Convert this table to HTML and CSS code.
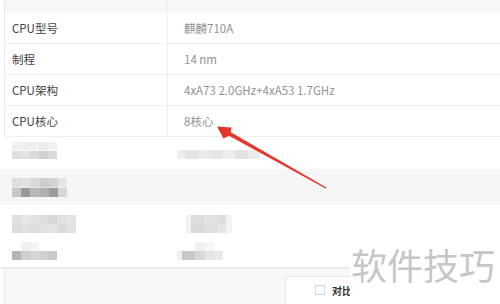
FILE: index.html
```html
<!DOCTYPE html>
<html lang="zh">
<head>
<meta charset="utf-8">
<link rel="stylesheet" href="styles.css">
</head>
<body>
<div class="page">
  <div class="spec">
    <div class="row head"><div class="label"></div><div class="value"></div></div>
    <div class="row"><div class="label">CPU型号</div><div class="value">麒麟710A</div></div>
    <div class="row"><div class="label">制程</div><div class="value">14 nm</div></div>
    <div class="row"><div class="label">CPU架构</div><div class="value">4xA73 2.0GHz+4xA53 1.7GHz</div></div>
    <div class="row"><div class="label">CPU核心</div><div class="value">8核心</div></div>
  </div>
  <div class="hidden">
    <div class="hrow hr-a"><span class="mz mz-a1"></span><span class="mz mz-a2"></span></div>
    <div class="hrow hr-b"><span class="mz mz-b1"></span></div>
    <div class="hrow hr-c"><span class="mz mz-c1"></span><span class="mz mz-c2"></span></div>
    <div class="hrow hr-d"><span class="mz mz-d1"></span><span class="mz mz-d2"></span></div>
  </div>
  <div class="footer">
    <div class="compare"><span class="check"></span><span class="compare-text">对比</span></div>
  </div>
  <div class="watermark">软件技巧</div>
  <svg class="arrow" width="500" height="304" viewBox="0 0 500 304">
    <polygon points="217,126.5 231.5,127.5 230.8,132.2 326.4,187.4 325.6,188.6 229,135.8 223.5,138.5" fill="#e8352b"/>
  </svg>
</div>
</body>
</html>
```
FILE: styles.css
```css
* { box-sizing: border-box; }
html, body { margin: 0; padding: 0; background: #fff; }
body {
  font-family: "Noto Sans CJK SC", "Noto Sans", sans-serif;
  width: 500px;
  height: 304px;
  overflow: hidden;
}
.page {
  position: relative;
  width: 500px;
  height: 304px;
  display: flex;
  flex-direction: column;
}
.spec {
  margin-left: 4px;
  border-left: 1px solid #ececec;
}
.row {
  display: flex;
  height: 31px;
  border-bottom: 1px solid #efefef;
  font-size: 11.5px;
  align-items: stretch;
}
.row.head {
  height: 13px;
  background: #f7f7f7;
  border-bottom: none;
}
.label {
  width: 163px;
  flex: none;
  padding-left: 7px;
  display: flex;
  align-items: center;
  color: #444;
  border-right: 1px solid #efefef;
}
.value {
  flex: 1;
  padding-left: 16px;
  display: flex;
  align-items: center;
  color: #929292;
}
.hidden {
  display: flex;
  flex-direction: column;
}
.hrow {
  position: relative;
  display: flex;
}
.hr-a { height: 32px; }
.hr-b { height: 36px; background: #f6f6f6; }
.hr-c { height: 33px; }
.hr-d { height: 31px; border-bottom: 2px solid #ececec; }
.mz {
  display: block;
  position: absolute;
  background-repeat: no-repeat;
  background-size: 100% 50%;
  background-position: top, bottom;
}
.mz-a1 {
  left: 12px; top: 5px; width: 45px; height: 17px;
  background-image:
    linear-gradient(to right, #f1f1f1 0 20%, #eeeeee 20% 40%, #f0f0f0 40% 60%, #ececec 60% 80%, #f2f2f2 80%),
    linear-gradient(to right, #dedede 0 20%, #e2e2e2 20% 40%, #dadada 40% 60%, #d0d0d0 60% 80%, #dbdbdb 80%);
}
.mz-a2 {
  left: 177px; top: 13px; width: 83px; height: 9px;
  background-size: 100% 100%;
  background-image: linear-gradient(to right, #eeeeee 0 10%, #e4e4e4 10% 25%, #ebebeb 25% 40%, #e6e6e6 40% 55%, #efefef 55% 70%, #e3e3e3 70% 85%, #ededed 85%);
}
.mz-b1 {
  left: 12px; top: 9px; width: 55px; height: 19px;
  background-image:
    linear-gradient(to right, #dedede 0 17%, #e2e2e2 17% 33%, #d9d9d9 33% 50%, #cdcdcd 50% 67%, #d4d4d4 67% 83%, #e6e6ea 83%),
    linear-gradient(to right, #c6c6c6 0 17%, #9c9899 17% 33%, #b8b8b8 33% 50%, #b0b0b0 50% 67%, #9e9a9b 67% 83%, #d6d6da 83%);
}
.mz-c1 {
  left: 12px; top: 10px; width: 64px; height: 18px;
  background-image:
    linear-gradient(to right, #e0e0e0 0 14%, #e6e6e6 14% 28%, #e2e2e2 28% 43%, #dcdcdc 43% 57%, #d8d8d8 57% 71%, #e0e0e0 71% 86%, #e4e4e4 86%),
    linear-gradient(to right, #dcdcdc 0 14%, #e0e0e0 14% 28%, #dedede 28% 43%, #e2e2e2 43% 57%, #e4e4e4 57% 71%, #dcdcdc 71% 86%, #e2e2e2 86%);
}
.mz-c2 {
  left: 186px; top: 10px; width: 46px; height: 18px;
  background-image:
    linear-gradient(to right, #f2f2f2 0 10%, #dddddd 10% 40%, #e2e2e2 40% 70%, #dedede 70% 88%, #f3f3f3 88%),
    linear-gradient(to right, #f2f2f2 0 10%, #dadada 10% 40%, #e0e0e0 40% 70%, #e6e6e6 70% 88%, #f3f3f3 88%);
}
.mz-d1 {
  left: 12px; top: 4px; width: 45px; height: 18px;
  background-image:
    linear-gradient(to right, #ffffff 0 20%, #f0f0f0 20% 40%, #f4f4f4 40% 60%, #ffffff 60%),
    linear-gradient(to right, #b4b4b4 0 20%, #cfcfcf 20% 40%, #d6d6d6 40% 60%, #d0d0d0 60% 80%, #cacaca 80%);
}
.mz-d2 {
  left: 177px; top: 4px; width: 46px; height: 18px;
  background-image:
    linear-gradient(to right, #ffffff 0 40%, #f0f0f0 40% 60%, #f6f6f6 60% 80%, #ffffff 80%),
    linear-gradient(to right, #f0f0f0 0 10%, #c8c8c8 10% 40%, #d8d8d8 40% 60%, #e4e4e4 60% 80%, #e8e8e8 80%);
}
.footer {
  flex: 1;
  margin-left: 4px;
  border-left: 1px solid #e8e8e8;
  background: #f8f8f8;
  display: flex;
  align-items: flex-start;
  padding-top: 7px;
}
.compare {
  margin-left: 280px;
  width: 110px;
  height: 30px;
  background: #fff;
  border-left: 1px solid #e6e6e6;
  border-top: 1px solid #e6e6e6;
  display: flex;
  align-items: center;
  padding-left: 29px;
  padding-bottom: 3px;
  white-space: nowrap;
}
.check {
  width: 10px;
  height: 10px;
  border: 1px solid #d4d4d4;
  background: #fff;
  flex: none;
}
.compare-text {
  margin-left: 7px;
  font-size: 10px;
  font-weight: 700;
  color: #333;
}
.watermark {
  position: absolute;
  left: 350px;
  top: 238px;
  width: 150px;
  height: 66px;
  background: #fff;
  color: #c6c6c6;
  font-size: 36px;
  line-height: 36px;
  padding-top: 8px;
  padding-left: 1px;
  white-space: nowrap;
}
.arrow {
  position: absolute;
  left: 0;
  top: 0;
  pointer-events: none;
}
```
